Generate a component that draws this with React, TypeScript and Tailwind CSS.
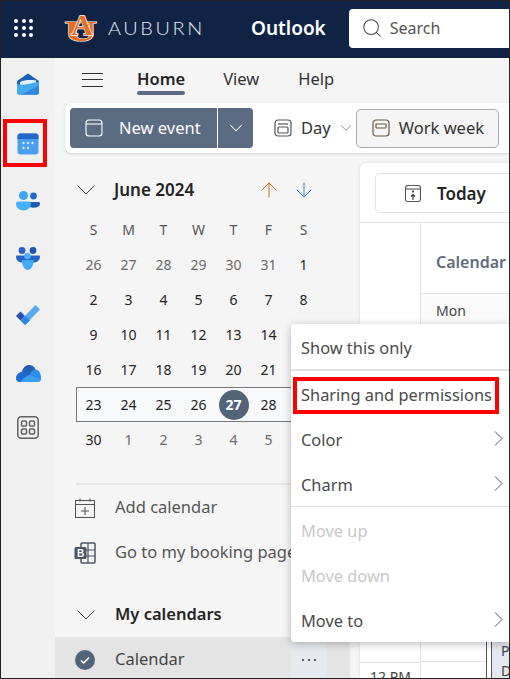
import { ChevronDown, ArrowUp, ArrowDown, Search } from "lucide-react";

const weeks = [
  ["26", "27", "28", "29", "30", "31", "1"],
  ["2", "3", "4", "5", "6", "7", "8"],
  ["9", "10", "11", "12", "13", "14", "15"],
  ["16", "17", "18", "19", "20", "21", "22"],
  ["23", "24", "25", "26", "27", "28", "29"],
  ["30", "1", "2", "3", "4", "5", "6"],
];

function isMuted(row: number, day: string) {
  return (row === 0 && day !== "1") || (row === 5 && day !== "30");
}

function Logo() {
  return (
    <svg width="36" height="31" viewBox="0 0 36 31" className="shrink-0">
      <text x="0" y="28" fontFamily="Liberation Serif" fontWeight="700" fontSize="29" fill="#e86c1f" stroke="#fff" strokeWidth="1" paintOrder="stroke" transform="translate(0.500 0) scale(1.56 1)">U</text>
      <text x="18" y="21.500" textAnchor="middle" fontFamily="Liberation Serif" fontWeight="700" fontSize="30" fill="#e86c1f" stroke="#fff" strokeWidth="1.400" paintOrder="stroke">A</text>
    </svg>
  );
}

function Chevron() {
  return (
    <svg width="18" height="10" viewBox="0 0 18 10" fill="none" stroke="#444" strokeWidth="1" className="shrink-0">
      <path d="M0.500 0.500 9 9l8.500-8.500" />
    </svg>
  );
}

function MailIcon() {
  return (
    <svg width="24" height="22" viewBox="0 0 24 22" className="ml-[-1px]">
      <path d="M1 8 12 0.500 23 8v11a2.500 2.500 0 0 1-2.500 2.500h-17A2.500 2.500 0 0 1 1 19z" fill="#1a62b4" />
      <path d="M4 9c4-2 10-2.500 16-1.500v3c-5 .5-11 2-16 1.500z" fill="#e4f1fd" />
      <path d="M1 11c5 1.500 10 .5 22-2.500V19a2.500 2.500 0 0 1-2.500 2.500h-17A2.500 2.500 0 0 1 1 19z" fill="#46aaf2" />
      <path d="M5 21.500 23 12.500V19a2.500 2.500 0 0 1-2.500 2.500z" fill="#2c88da" />
    </svg>
  );
}

function CalendarColorIcon() {
  return (
    <svg width="22" height="22" viewBox="0 0 22 22">
      <rect x="0.500" y="0.500" width="21" height="21" rx="3" fill="#4a9ff0" />
      <path d="M0.500 6V3.500a3 3 0 0 1 3-3h15a3 3 0 0 1 3 3V6z" fill="#2467c8" />
      <g fill="#dbeafe">
        <circle cx="6.500" cy="10" r="1.200" />
        <circle cx="11" cy="10" r="1.200" />
        <circle cx="15.500" cy="10" r="1.200" />
        <circle cx="6.500" cy="15" r="1.200" />
        <circle cx="11" cy="15" r="1.200" />
      </g>
    </svg>
  );
}

function PeopleIcon() {
  return (
    <svg width="24" height="20" viewBox="0 0 24 20">
      <circle cx="17.500" cy="5" r="3.400" fill="#2468c8" />
      <path d="M12 11h10.500a1.500 1.500 0 0 1 1.500 1.500c0 2.500-2.500 4.200-6 4.200s-6-1-6-5.700z" fill="#1d5ab4" />
      <circle cx="7.500" cy="4.500" r="4.500" fill="#3ea6f5" />
      <path d="M2 10.500h11a2 2 0 0 1 2 2c0 4-3.200 7-7.500 7S0 16.500 0 12.500a2 2 0 0 1 2-2z" fill="#46b0f8" />
    </svg>
  );
}

function TeamsIcon() {
  return (
    <svg width="24" height="23" viewBox="0 0 24 23">
      <circle cx="6" cy="3.500" r="3.400" fill="#2a5ec0" />
      <circle cx="17" cy="3.500" r="3.400" fill="#1f55b0" />
      <path d="M1 8.500h22a1 1 0 0 1 1 1c0 3.500-2.500 6-6 6H6c-3.500 0-6-2.500-6-6a1 1 0 0 1 1-1z" fill="#2364c4" />
      <circle cx="11.500" cy="9" r="3.200" fill="#4cb4fa" />
      <path d="M6.500 13h10.500a.500.500 0 0 1 .500.500C17.500 19 15 23 11.700 23S6 19 6 13.500a.500.500 0 0 1 .500-.500z" fill="#40aaf5" />
    </svg>
  );
}

function TodoIcon() {
  return (
    <svg width="24" height="20" viewBox="0 0 24 20">
      <path d="M0 11 4.500 6.500 9 11 4.500 15.500z" fill="#2a50b8" />
      <path d="M4.500 15.500 19.500 0 24 4.500 9 20z" fill="#58aaee" />
      <path d="M4.500 15.500 9 11l5 4.500L9 20z" fill="#2f86e0" />
    </svg>
  );
}

function CloudIcon() {
  return (
    <svg width="25" height="17" viewBox="0 0 25 17">
      <path d="M6 6.500C7 2.500 10 0 13 0c3 0 5.500 1.700 6.500 4.500l-7 7z" fill="#1f5fb8" />
      <path d="M4 17a4 4 0 0 1-4-4c0-3 2.500-5.500 6-6.500l6.500 3.500 3 7z" fill="#1a6ed0" />
      <path d="M12 17 8 13.500l6-4.500c1-3 3.500-4.500 5.500-4.500 3 0 5.500 3 5.500 8.500 0 2.500-1.500 4-4 4z" fill="#2f8fe6" />
      <path d="M4 17c2-2 5-5 9-7l12 5c-.5 1.300-2 2-3.500 2z" fill="#3c9ef0" />
    </svg>
  );
}

function AppsIcon() {
  return (
    <svg width="22" height="23" viewBox="0 0 22 23" fill="none" stroke="#616161" strokeWidth="1.500">
      <rect x="0.800" y="0.800" width="20.400" height="21.400" rx="3.500" />
      <rect x="4.500" y="5" width="5" height="5" rx="1" />
      <rect x="12.500" y="5" width="5" height="5" rx="1" />
      <rect x="4.500" y="13" width="5" height="5" rx="1" />
      <rect x="12.500" y="13" width="5" height="5" rx="1" />
    </svg>
  );
}

function MenuItem({ label, disabled, arrow, boxed }: { label: string; disabled?: boolean; arrow?: boolean; boxed?: boolean }) {
  return (
    <div className={`relative flex h-[45px] items-center justify-between pl-[10px] pr-[6px] pt-[3px] text-[16.4px] ${disabled ? "text-[#c8c8c8]" : "text-[#4a4a4a]"}`}>
      <span className="whitespace-nowrap">{label}</span>
      {arrow && (
        <svg width="9" height="15" viewBox="0 0 9 15" fill="none" stroke="#555" strokeWidth="1" className="-mt-[3px]">
          <path d="M1 0.500 8 7.500l-7 7" />
        </svg>
      )}
      {boxed && <div className="absolute left-[2px] top-[6px] h-[37px] w-[206px] border-[4px] border-[#ff0000]" />}
    </div>
  );
}

export default function App() {
  return (
    <div className="relative flex h-[679px] w-[510px] flex-col overflow-hidden border border-[#222] bg-[#f5f5f5] text-[#242424] [font-family:'Noto_Sans',sans-serif]">
      {/* Header */}
      <header className="flex h-[57px] shrink-0 items-center bg-[#102344] pb-[3px] text-white">
        <div className="ml-[13px] grid w-[20px] grid-cols-3 gap-[3px]">
          {[0, 1, 2, 3, 4, 5, 6, 7, 8].map((i) => (
            <span key={i} className="h-[4px] w-[4px] rounded-full bg-white" />
          ))}
        </div>
        <div className="ml-[30px]">
          <Logo />
        </div>
        <div className="ml-[8px] w-[101px] shrink-0">
          <span className="block origin-left scale-x-[1.17] whitespace-nowrap text-[17px] font-light leading-none tracking-[2.2px] text-[#e6e8ee] [font-family:'Lato',sans-serif]">AUBURN</span>
        </div>
        <span className="ml-[42px] text-[19px] font-semibold">Outlook</span>
        <div className="ml-[23px] flex h-[39px] flex-1 items-center rounded-l-[4px] bg-white pl-[12px] text-[#555]">
          <Search size={22} strokeWidth={1.1} className="text-[#444]" />
          <span className="ml-[7px] text-[16px]">Search</span>
        </div>
      </header>

      <div className="flex min-h-0 flex-1">
        {/* App rail */}
        <nav className="flex w-[54px] shrink-0 flex-col items-center bg-[#f0f0f0]">
          <div className="mt-[15px]"><MailIcon /></div>
          <div className="mt-[38px]"><CalendarColorIcon /></div>
          <div className="mt-[36px]"><PeopleIcon /></div>
          <div className="mt-[36px]"><TeamsIcon /></div>
          <div className="mt-[35px]"><TodoIcon /></div>
          <div className="mt-[40px]"><CloudIcon /></div>
          <div className="mt-[34px]"><AppsIcon /></div>
        </nav>

        <div className="flex min-w-0 flex-1 flex-col">
          {/* Tabs */}
          <div className="flex h-[45px] shrink-0 items-center pb-[2px] text-[16.5px]">
            <div className="ml-[27px] flex h-[14px] w-[21px] flex-col justify-between">
              <span className="h-px bg-[#333]" />
              <span className="h-px bg-[#333]" />
              <span className="h-px bg-[#333]" />
            </div>
            <div className="relative ml-[34px] font-semibold">
              Home
              <span className="absolute left-0 top-[24px] h-[4px] w-[48px] rounded-full bg-[#5b6b82]" />
            </div>
            <span className="ml-[38px] text-[#333]">View</span>
            <span className="ml-[39px] text-[#333]">Help</span>
          </div>

          {/* Toolbar */}
          <div className="ml-[10px] flex h-[50px] shrink-0 items-center rounded-l-[6px] bg-white pl-[5px] text-[16.5px] shadow-[0_1px_3px_rgba(0,0,0,0.15)]">
            <div className="flex h-[40px] w-[147px] items-center rounded-l-[4px] bg-[#5b6b82] pl-[15px] text-white">
              <svg width="18" height="18" viewBox="0 0 18 18" fill="none" stroke="#fff" strokeWidth="1.100">
                <rect x="1" y="1" width="16" height="16" rx="3" />
                <path d="M1 5h16" />
              </svg>
              <span className="ml-[16px]">New event</span>
            </div>
            <div className="ml-px flex h-[40px] w-[35px] items-center justify-center rounded-r-[4px] bg-[#5b6b82] text-white">
              <ChevronDown size={22} strokeWidth={1.1} />
            </div>
            <svg width="18" height="18" viewBox="0 0 18 18" fill="none" stroke="#555" strokeWidth="1.200" className="ml-[21px]">
              <rect x="1" y="1" width="16" height="16" rx="3" />
              <path d="M4 5h10" />
              <rect x="4" y="8" width="10" height="6" rx="1" />
            </svg>
            <span className="ml-[9px] text-[#333]">Day</span>
            <ChevronDown size={18} strokeWidth={1} className="ml-[6px] text-[#666]" />
            <div className="ml-px flex h-[39px] w-[143px] items-center rounded-[5px] border border-[#aaa] bg-[#f5f5f5] pl-[15px] text-[#333]">
              <svg width="18" height="18" viewBox="0 0 18 18" fill="none" stroke="#6b5a48" strokeWidth="1.200">
                <rect x="1" y="1" width="16" height="16" rx="3" />
                <rect x="4" y="5" width="10" height="4" rx="0.500" />
              </svg>
              <span className="ml-[9px] whitespace-nowrap">Work week</span>
            </div>
          </div>

          <div className="flex min-h-0 flex-1">
            {/* Sidebar */}
            <aside className="flex w-[305px] shrink-0 flex-col">
              <div className="ml-[22px] mt-[22px] flex h-[30px] w-[244px] shrink-0 items-center">
                <Chevron />
                <span className="ml-[19px] whitespace-nowrap text-[17px] font-semibold">June 2024</span>
                <ArrowUp size={24} strokeWidth={1} className="ml-[63px] shrink-0 text-[#c8731a]" />
                <ArrowDown size={24} strokeWidth={1} className="ml-[11px] shrink-0 text-[#3a80c8]" />
              </div>

              <div className="ml-[21px] mt-[7px] w-[245px] text-[14px]">
                <div className="flex h-[35px] items-center text-[#555]">
                  {["S", "M", "T", "W", "T", "F", "S"].map((d, i) => (
                    <span key={i} className="w-[35px] text-center">{d}</span>
                  ))}
                </div>
                {weeks.map((week, row) => (
                  <div key={row} className={`flex h-[35px] items-center ${row === 4 ? "bg-[#f8f9fb] outline outline-1 -outline-offset-1 outline-[#777]" : ""}`}>
                    {week.map((day, i) =>
                      day === "27" && row === 4 ? (
                        <span key={i} className="flex w-[35px] justify-center">
                          <span className="flex h-[30px] w-[30px] items-center justify-center rounded-full bg-[#536378] font-bold text-white">27</span>
                        </span>
                      ) : (
                        <span key={i} className={`w-[35px] text-center ${isMuted(row, day) ? "text-[#6a6a6a]" : "text-[#242424]"}`}>{day}</span>
                      )
                    )}
                  </div>
                ))}
              </div>

              <div className="ml-[21px] mt-[26px] h-[2px] w-[245px] shrink-0 bg-[#e4e4e4]" />

              <div className="flex h-[45px] shrink-0 items-center pl-[20px] text-[16.5px] text-[#555]">
                <svg width="20" height="20" viewBox="0 0 20 20" fill="none" stroke="#555" strokeWidth="1.100" className="shrink-0">
                  <rect x="0.500" y="2.500" width="19" height="17" />
                  <path d="M0.500 6.500h19M5 0.500v3M15 0.500v3M6 13h8M10 9v8" />
                </svg>
                <span className="ml-[20px]">Add calendar</span>
              </div>
              <div className="flex h-[45px] shrink-0 items-center pl-[19px] text-[16.5px] text-[#555]">
                <svg width="22" height="22" viewBox="0 0 22 22" className="shrink-0">
                  <rect x="7" y="1" width="14" height="20" rx="1" fill="none" stroke="#4b5563" strokeWidth="1.500" />
                  <path d="M14 1v20M7 8h14M7 14h14" stroke="#4b5563" strokeWidth="1.200" />
                  <rect x="0.500" y="5" width="12" height="12" rx="1.500" fill="#4b5563" />
                  <text x="6.500" y="14.500" textAnchor="middle" fontSize="10" fontWeight="700" fill="#fff" fontFamily="Liberation Sans">B</text>
                </svg>
                <span className="ml-[19px] whitespace-nowrap">Go to my booking page</span>
              </div>

              <div className="mt-[17px] flex h-[45px] shrink-0 items-center pl-[22px] text-[16.5px]">
                <Chevron />
                <span className="ml-[20px] font-semibold">My calendars</span>
              </div>
              <div className="flex h-[41px] w-[295px] shrink-0 items-center justify-between bg-[#e4e4e4] pl-[20px] pr-[24px] text-[16.5px] text-[#444]">
                <div className="flex items-center pt-[4px]">
                  <svg width="20" height="20" viewBox="0 0 20 20" className="shrink-0">
                    <circle cx="10" cy="10" r="10" fill="#536378" />
                    <path d="M6 10.500 8.700 13 14 7.500" fill="none" stroke="#fff" strokeWidth="1.600" />
                  </svg>
                  <span className="ml-[20px]">Calendar</span>
                </div>
                <div className="flex h-[41px] w-[35px] items-center justify-center gap-[4px] bg-[#e6e9ee] pt-[4px]">
                  <span className="h-[2px] w-[2px] rounded-full bg-[#333]" />
                  <span className="h-[2px] w-[2px] rounded-full bg-[#333]" />
                  <span className="h-[2px] w-[2px] rounded-full bg-[#333]" />
                </div>
              </div>
            </aside>

            {/* Calendar panel */}
            <main className="mt-[10px] flex min-w-0 flex-1 flex-col rounded-tl-[6px] bg-white shadow-[0_0_3px_rgba(0,0,0,0.12)]">
              <div className="h-[60px] shrink-0 border-b border-[#e2e2e2] pl-[15px] pt-[10px]">
                <div className="flex h-[40px] items-center rounded-l-[5px] border border-r-0 border-[#e2e2e2] pl-[29px]">
                  <svg width="16" height="17" viewBox="0 0 16 17" fill="none" stroke="#555" strokeWidth="1.100" className="shrink-0">
                    <rect x="0.500" y="0.500" width="15" height="16" rx="2.500" />
                    <path d="M0.500 4h15" />
                    <path d="M8 15V9.500M6 11.500l2-2 2 2" stroke="#333" />
                    <circle cx="8" cy="6.500" r="0.600" fill="#333" />
                  </svg>
                  <span className="ml-[16px] mt-[1px] text-[17px] font-semibold">Today</span>
                </div>
              </div>
              <div className="flex min-h-0 flex-1">
                <div className="flex w-[60px] shrink-0 flex-col">
                  <div className="flex-1 border-b border-[#e2e2e2]" />
                  <div className="h-[15px] overflow-hidden whitespace-nowrap pl-[10px] pt-[5px] text-[14px] leading-[17px] text-[#444]">12 PM</div>
                </div>
                <div className="flex min-w-0 flex-1 flex-col border-l border-[#e2e2e2]">
                  <div className="flex h-[71px] shrink-0 items-center overflow-hidden whitespace-nowrap border-b border-[#e2e2e2] pl-[15px] pt-[7px] text-[16px] font-semibold text-[#616b7e]">Calendar</div>
                  <div className="h-[30px] shrink-0 bg-[#fafafa] pl-[15px] pt-[6px] text-[14px] text-[#444]">Mon</div>
                  <div className="flex-1" />
                  <div className="flex h-[37px] shrink-0">
                    <div className="flex w-[66px] shrink-0 flex-col border-r border-[#555]">
                      <div className="h-[21px] border-b border-[#e2e2e2]" />
                    </div>
                    <div className="ml-[4px] flex-1 border-l border-[#555] bg-[#e6e8f0] pl-[9px] text-[14px] leading-[20px] text-[#444]">
                      <div>P</div>
                      <div>D</div>
                    </div>
                  </div>
                </div>
              </div>
            </main>
          </div>
        </div>
      </div>

      {/* Red highlight on the rail */}
      <div className="absolute left-[2px] top-[118px] h-[48px] w-[44px] border-[4px] border-[#ff0000]" />

      {/* Context menu */}
      <div className="absolute left-[290px] top-[323px] w-[218px] rounded-l-[4px] bg-white shadow-[0_2px_8px_rgba(0,0,0,0.25)]">
        <MenuItem label="Show this only" />
        <div className="h-[2px] bg-[#e0e0e0]" />
        <MenuItem label="Sharing and permissions" boxed />
        <MenuItem label="Color" arrow />
        <MenuItem label="Charm" arrow />
        <div className="h-px bg-[#e0e0e0]" />
        <MenuItem label="Move up" disabled />
        <MenuItem label="Move down" disabled />
        <MenuItem label="Move to" arrow />
      </div>
    </div>
  );
}
